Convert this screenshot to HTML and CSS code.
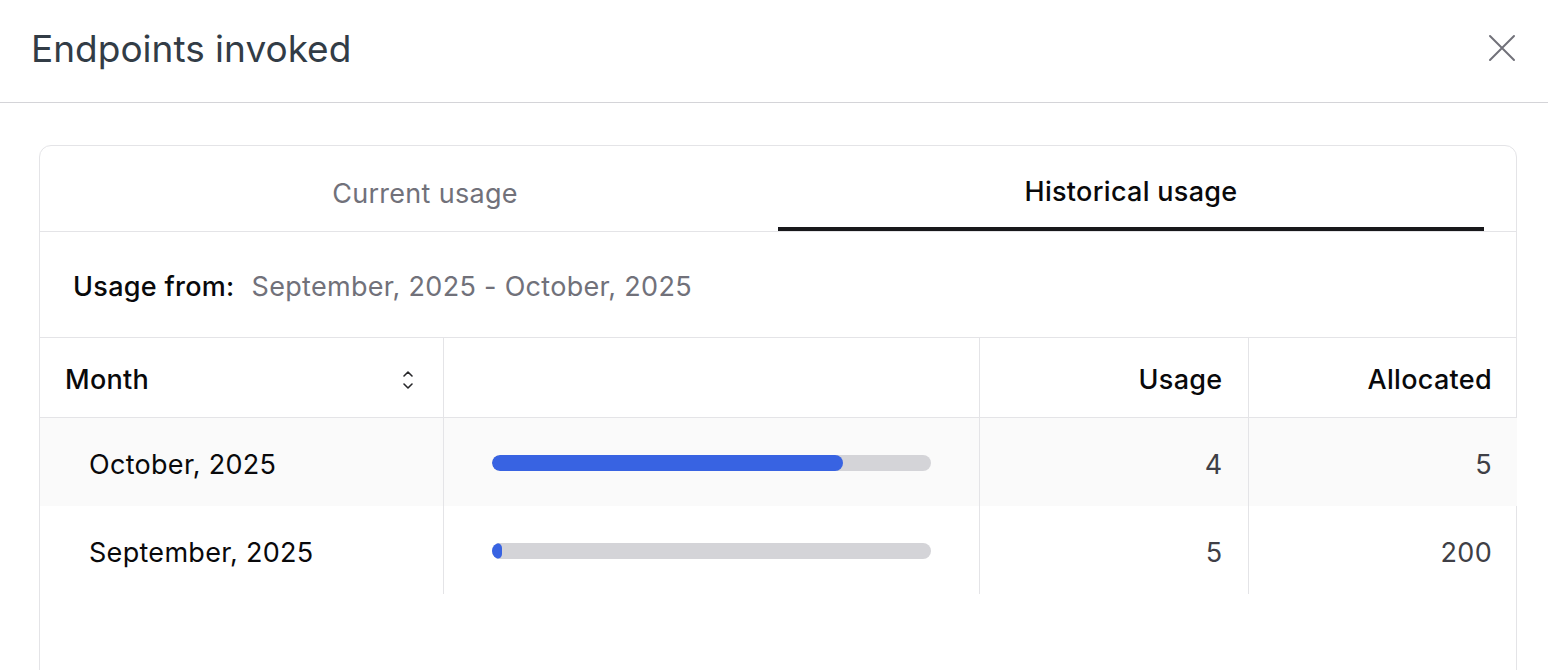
FILE: index.html
```html
<!DOCTYPE html>
<html lang="en">
<head>
    <meta charset="UTF-8">
    <meta name="viewport" content="width=device-width, initial-scale=1.0">
    <title>Endpoints invoked</title>
    <link rel="stylesheet" href="styles.css">
</head>
<body>
    <div class="modal">
        <div class="modal-header">
            <h1 class="modal-title">Endpoints invoked</h1>
            <button class="close" aria-label="Close">
                <svg width="28" height="28" viewBox="0 0 28 28" fill="none" stroke="#71717a" stroke-width="2" stroke-linecap="round">
                    <path d="M2 2L26 26M26 2L2 26"/>
                </svg>
            </button>
        </div>
        <div class="modal-body">
            <div class="card">
                <div class="tabs">
                    <button class="tab">Current usage</button>
                    <button class="tab active">Historical usage</button>
                </div>
                <div class="range">
                    <span class="range-label">Usage from:</span>
                    <span class="range-value">September, 2025 - October, 2025</span>
                </div>
                <table class="usage-table">
                    <colgroup>
                        <col class="col-month">
                        <col class="col-bar">
                        <col class="col-num">
                        <col class="col-num">
                    </colgroup>
                    <thead>
                        <tr>
                            <th class="month-head">
                                <div class="sortable">
                                    <span>Month</span>
                                    <svg width="14" height="24" viewBox="0 0 14 24" fill="none" stroke="#27272a" stroke-width="1.6" stroke-linecap="round" stroke-linejoin="round">
                                        <path d="M3 8L7 4L11 8"/>
                                        <path d="M3 16L7 20L11 16"/>
                                    </svg>
                                </div>
                            </th>
                            <th></th>
                            <th class="num">Usage</th>
                            <th class="num">Allocated</th>
                        </tr>
                    </thead>
                    <tbody>
                        <tr class="striped">
                            <td class="month">October, 2025</td>
                            <td class="bar-cell"><div class="bar"><div class="bar-fill" style="width: 80%"></div></div></td>
                            <td class="num">4</td>
                            <td class="num">5</td>
                        </tr>
                        <tr>
                            <td class="month">September, 2025</td>
                            <td class="bar-cell"><div class="bar"><div class="bar-fill" style="width: 2.5%"></div></div></td>
                            <td class="num">5</td>
                            <td class="num">200</td>
                        </tr>
                    </tbody>
                </table>
            </div>
        </div>
    </div>
</body>
</html>
```

FILE: styles.css
```css
body {
    margin: 0;
    font-family: Inter, "Noto Sans", Arial, sans-serif;
    background: #ffffff;
    color: #09090b;
}
.modal-header {
    height: 103px;
    display: flex;
    align-items: center;
    justify-content: space-between;
    padding: 0 32px 6px 31px;
    box-sizing: border-box;
    border-bottom: 1px solid #d4d4d8;
}
.modal-title {
    margin: 0;
    font-size: 37px;
    font-weight: 400;
    color: #323c46;
}
.close {
    border: none;
    background: none;
    padding: 0;
    width: 28px;
    height: 28px;
    cursor: pointer;
}
.modal-body {
    padding: 42px 31px 0 39px;
}
.card {
    border: 1px solid #e4e4e7;
    border-radius: 12px;
    min-height: 600px;
}
.tabs {
    display: grid;
    grid-template-columns: 1fr 1fr;
    padding: 0 32px;
    height: 85px;
    border-bottom: 1px solid #e4e4e7;
}
.tab {
    border: none;
    background: none;
    font-family: inherit;
    font-size: 27px;
    letter-spacing: 0.3px;
    color: #71717a;
    padding: 14px 0 0;
    border-bottom: 4px solid transparent;
    cursor: pointer;
}
.tab.active {
    color: #09090b;
    font-weight: 500;
    border-bottom-color: #18181b;
    padding-top: 10px;
}
.range {
    height: 105px;
    display: flex;
    align-items: center;
    gap: 17px;
    padding: 4px 33px 0;
    box-sizing: border-box;
    font-size: 27px;
    letter-spacing: 0.3px;
}
.range-label {
    font-weight: 500;
    color: #09090b;
}
.range-value {
    color: #71717a;
}
.usage-table {
    width: 100%;
    border-collapse: collapse;
    table-layout: fixed;
    font-size: 27px;
    letter-spacing: 0.3px;
}
.col-month {
    width: 403px;
}
.col-bar {
    width: 536px;
}
.col-num {
    width: 269px;
}
.usage-table th {
    height: 75px;
    font-weight: 500;
    text-align: left;
    padding: 4px 25px 0;
    border-top: 1px solid #e4e4e7;
    border-bottom: 1px solid #e4e4e7;
}
.usage-table th + th,
.usage-table td + td {
    border-left: 1px solid #e4e4e7;
}
.sortable {
    display: flex;
    align-items: center;
    justify-content: space-between;
    padding-right: 3px;
}
.sortable svg {
    display: block;
}
.usage-table td {
    height: 84px;
    padding: 4px 25px 0;
}
.usage-table .num {
    text-align: right;
}
td.num {
    color: #3f3f46;
}
.striped {
    background: #fafafa;
}
td.month {
    padding-left: 49px;
}
td.bar-cell {
    padding: 0 48px;
}
.bar {
    height: 16px;
    border-radius: 8px;
    background: #d4d4d8;
    overflow: hidden;
    margin-top: 2px;
}
.bar-fill {
    height: 100%;
    border-radius: 8px;
    background: #3863e2;
}
```
